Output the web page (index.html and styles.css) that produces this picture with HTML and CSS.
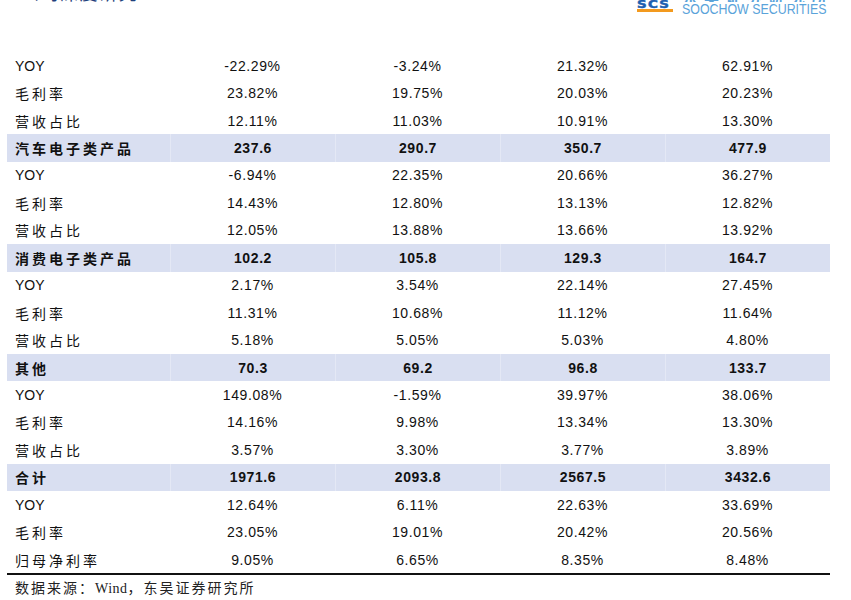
FILE: index.html
```html
<!DOCTYPE html>
<html lang="zh-CN">
<head>
<meta charset="utf-8">
<link rel="stylesheet" href="styles.css">
</head>
<body>
<div class="page">
  <header class="top">
    <div class="title">公司深度研究</div>
    <div class="brand">
      <div class="scs">
        <span class="scs-text">SCS</span>
        <span class="scs-bar"></span>
      </div>
      <div class="brand-names">
        <div class="brand-cn">东吴证券研究所</div>
        <div class="brand-en">SOOCHOW SECURITIES</div>
      </div>
    </div>
  </header>

  <div class="table">
    <div class="row"><div class="lab en">YOY</div><div>-22.29%</div><div>-3.24%</div><div>21.32%</div><div>62.91%</div></div>
    <div class="row"><div class="lab">毛利率</div><div>23.82%</div><div>19.75%</div><div>20.03%</div><div>20.23%</div></div>
    <div class="row"><div class="lab">营收占比</div><div>12.11%</div><div>11.03%</div><div>10.91%</div><div>13.30%</div></div>
    <div class="row hl"><div class="lab">汽车电子类产品</div><div>237.6</div><div>290.7</div><div>350.7</div><div>477.9</div></div>
    <div class="row"><div class="lab en">YOY</div><div>-6.94%</div><div>22.35%</div><div>20.66%</div><div>36.27%</div></div>
    <div class="row"><div class="lab">毛利率</div><div>14.43%</div><div>12.80%</div><div>13.13%</div><div>12.82%</div></div>
    <div class="row"><div class="lab">营收占比</div><div>12.05%</div><div>13.88%</div><div>13.66%</div><div>13.92%</div></div>
    <div class="row hl"><div class="lab">消费电子类产品</div><div>102.2</div><div>105.8</div><div>129.3</div><div>164.7</div></div>
    <div class="row"><div class="lab en">YOY</div><div>2.17%</div><div>3.54%</div><div>22.14%</div><div>27.45%</div></div>
    <div class="row"><div class="lab">毛利率</div><div>11.31%</div><div>10.68%</div><div>11.12%</div><div>11.64%</div></div>
    <div class="row"><div class="lab">营收占比</div><div>5.18%</div><div>5.05%</div><div>5.03%</div><div>4.80%</div></div>
    <div class="row hl"><div class="lab">其他</div><div>70.3</div><div>69.2</div><div>96.8</div><div>133.7</div></div>
    <div class="row"><div class="lab en">YOY</div><div>149.08%</div><div>-1.59%</div><div>39.97%</div><div>38.06%</div></div>
    <div class="row"><div class="lab">毛利率</div><div>14.16%</div><div>9.98%</div><div>13.34%</div><div>13.30%</div></div>
    <div class="row"><div class="lab">营收占比</div><div>3.57%</div><div>3.30%</div><div>3.77%</div><div>3.89%</div></div>
    <div class="row hl"><div class="lab">合计</div><div>1971.6</div><div>2093.8</div><div>2567.5</div><div>3432.6</div></div>
    <div class="row"><div class="lab en">YOY</div><div>12.64%</div><div>6.11%</div><div>22.63%</div><div>33.69%</div></div>
    <div class="row"><div class="lab">毛利率</div><div>23.05%</div><div>19.01%</div><div>20.42%</div><div>20.56%</div></div>
    <div class="row"><div class="lab">归母净利率</div><div>9.05%</div><div>6.65%</div><div>8.35%</div><div>8.48%</div></div>
  </div>

  <div class="source">数据来源：<span class="en">Wind</span>，东吴证券研究所</div>
</div>
</body>
</html>
```

FILE: styles.css
```css
html, body {
  margin: 0;
  padding: 0;
  background: #ffffff;
}

.page {
  width: 851px;
  height: 600px;
  overflow: hidden;
  font-family: "Liberation Sans", "Noto Sans CJK SC", sans-serif;
  color: #111111;
}

.top {
  height: 52px;
  display: flex;
  justify-content: space-between;
  align-items: flex-start;
  overflow: hidden;
}

.title {
  margin: -20px 0 0 21px;
  font-family: "Noto Sans CJK SC", sans-serif;
  font-size: 18px;
  line-height: 24px;
  letter-spacing: 1.5px;
  color: #1f3f7c;
}

.brand {
  margin: 0 18px 0 0;
  display: flex;
  align-items: flex-start;
  gap: 9px;
}

.scs {
  display: flex;
  flex-direction: column;
  width: 36px;
}

.scs-text {
  font-family: "DejaVu Sans", sans-serif;
  font-weight: 900;
  font-size: 11px;
  line-height: 8px;
  height: 8px;
  padding-top: 1px;
  letter-spacing: 1px;
  color: #1d5fb0;
  -webkit-text-stroke: 0.5px #1d5fb0;
  transform: scaleX(1.22);
  transform-origin: left;
}

.scs-bar {
  height: 3px;
  background: #f39a1e;
  margin-top: 0;
}

.brand-names {
  display: flex;
  flex-direction: column;
  align-items: flex-start;
  margin-top: -11px;
}

.brand-cn {
  font-family: "Noto Sans CJK SC", sans-serif;
  font-weight: 700;
  font-size: 15px;
  line-height: 16px;
  height: 13px;
  overflow: hidden;
  letter-spacing: 6.5px;
  color: #5aa3da;
}

.brand-en {
  font-family: "Liberation Sans", sans-serif;
  font-size: 14px;
  line-height: 15px;
  width: 141px;
  color: #5aa3da;
  white-space: nowrap;
  transform: scaleX(0.885);
  transform-origin: left;
}

.table {
  margin-left: 7px;
  width: 823px;
  display: grid;
  grid-auto-rows: 27.44px;
  border-bottom: 2px solid #111111;
}

.row {
  display: grid;
  grid-template-columns: 163px 165px 165px 165px 165px;
  align-items: center;
  font-size: 14px;
  letter-spacing: 0.6px;
}

.row > div {
  height: 100%;
  display: flex;
  align-items: center;
  justify-content: center;
  white-space: nowrap;
}

.row > .lab {
  justify-content: flex-start;
  padding-left: 8px;
  font-family: "Noto Sans CJK SC", sans-serif;
  letter-spacing: 3px;
}

.row > .lab.en {
  font-family: "Liberation Sans", sans-serif;
  letter-spacing: 0;
}

.row.hl {
  background: #d9dff1;
  font-weight: 700;
}

.row.hl > div + div {
  border-left: 1px solid #e4e8f5;
}

.source {
  margin: 2px 0 0 15px;
  font-family: "Liberation Serif", "Noto Sans CJK SC", serif;
  font-size: 14px;
  letter-spacing: 2px;
  color: #222222;
}

.source .en {
  letter-spacing: 0.5px;
}
```
